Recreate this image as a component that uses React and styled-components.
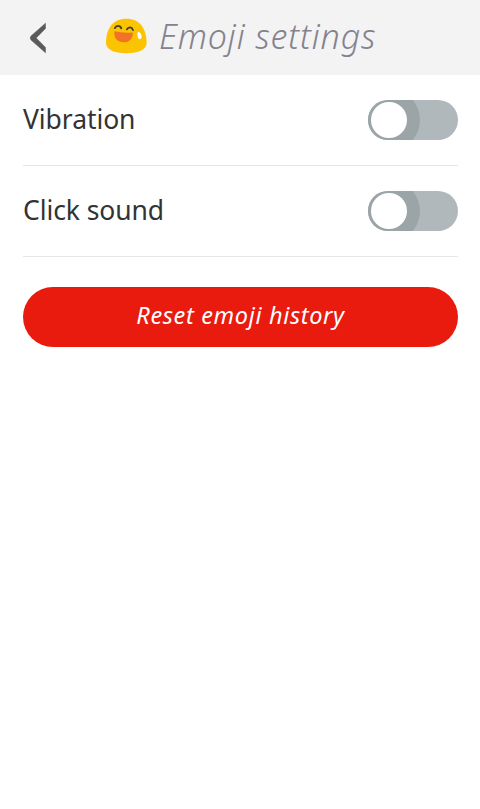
import React, { useState } from "react";
import styled, { createGlobalStyle } from "styled-components";

const GlobalStyle = createGlobalStyle`
  * { box-sizing: border-box; }
  body {
    margin: 0;
    background: #fff;
    font-family: "Noto Sans", "Open Sans", sans-serif;
  }
`;

const Page = styled.div`
  min-height: 100vh;
  background: #fff;
`;

const Header = styled.header`
  display: flex;
  height: 75px;
  background: #f3f3f3;
`;

const BackButton = styled.button`
  display: flex;
  align-items: flex-start;
  width: 47px;
  height: 75px;
  margin: 0 59px 0 0;
  padding: 22px 0 0 29px;
  border: 0;
  background: none;
  line-height: 0;
  svg { display: block; flex: none; }
`;

const EmojiIcon = styled.svg`
  flex: none;
  margin: 18px 12px 0 0;
`;

const Title = styled.h1`
  margin: 0;
  font-size: 34px;
  font-style: italic;
  font-weight: 300;
  line-height: 72px;
  letter-spacing: 0.87px;
  white-space: nowrap;
  color: #85828f;
`;

const Content = styled.main`
  padding: 0 22px 0 23px;
`;

const Row = styled.div`
  display: flex;
  align-items: center;
  justify-content: space-between;
  height: 91px;
  border-bottom: 1px solid #e6e6e6;
`;

const Label = styled.span`
  padding-bottom: 2px;
  font-size: 26.5px;
  line-height: 36px;
  letter-spacing: -0.08px;
  white-space: nowrap;
  color: #333;
`;

const Switch = styled.button`
  display: flex;
  align-items: center;
  justify-content: ${({ $on }) => ($on ? "flex-end" : "flex-start")};
  width: 90px;
  height: 40px;
  padding: 0 3px;
  border: 0;
  border-radius: 20px;
  background: #b0b8bb;
  overflow: hidden;
`;

const Knob = styled.span`
  width: 36px;
  height: 36px;
  border-radius: 50%;
  background: #fff;
  box-shadow: 0 0 0 13px #9ba5a7;
`;

const ResetButton = styled.button`
  display: block;
  width: 100%;
  height: 60px;
  margin-top: 30px;
  padding: 0 0 4px;
  border: 0;
  border-radius: 30px;
  background: #e91b0f;
  color: #fff;
  font-family: inherit;
  font-size: 23.5px;
  font-style: italic;
  letter-spacing: 0.66px;
`;

function Toggle({ label }) {
  const [on, setOn] = useState(false);
  return (
    <Switch role="switch" aria-label={label} aria-checked={on} $on={on} onClick={() => setOn(!on)}>
      <Knob />
    </Switch>
  );
}

export default function App() {
  return (
    <Page>
      <GlobalStyle />
      <Header>
        <BackButton aria-label="Back">
          <svg width="18" height="32" viewBox="0 0 18 32">
            <path d="M16.5 1.2V6.6L7.2 16L16.5 25.4V30.8L2 18Q.2 16 2 14Z" fill="#5a5a5a" stroke="#5a5a5a" strokeWidth=".5" />
          </svg>
        </BackButton>
        <EmojiIcon width="41" height="36" viewBox="0 0 41 36">
          <path d="M20.3.8C34 .8 40.6 11 40.6 25C40.6 31.5 33 35.3 20.3 35.3S0 31.5 0 25C0 11 6.6.8 20.3.8Z" fill="#fcc400" />
          <path d="M8.4 13.3Q17.4 15.3 26.8 14.4C27.2 20.7 23.4 24.2 18 24.2C11.8 24.2 7.5 20.7 8.4 13.3Z" fill="#f07328" />
          <path d="M8.9 10.1C10.2 7.1 14 7 15.3 10.4M20.9 11.4C22.5 8.2 26.2 8.8 27 12.1" fill="none" stroke="#423e2b" strokeWidth="1.8" strokeLinecap="round" />
          <path d="M32.2 13.8C34.4 14.4 35.8 17 35.6 19.3C35.4 21.8 32.2 21.7 31.9 19.2C31.7 17.3 31 15 32.2 13.8Z" fill="#fff" />
        </EmojiIcon>
        <Title>Emoji settings</Title>
      </Header>
      <Content>
        <Row>
          <Label>Vibration</Label>
          <Toggle label="Vibration" />
        </Row>
        <Row>
          <Label>Click sound</Label>
          <Toggle label="Click sound" />
        </Row>
        <ResetButton>Reset emoji history</ResetButton>
      </Content>
    </Page>
  );
}
